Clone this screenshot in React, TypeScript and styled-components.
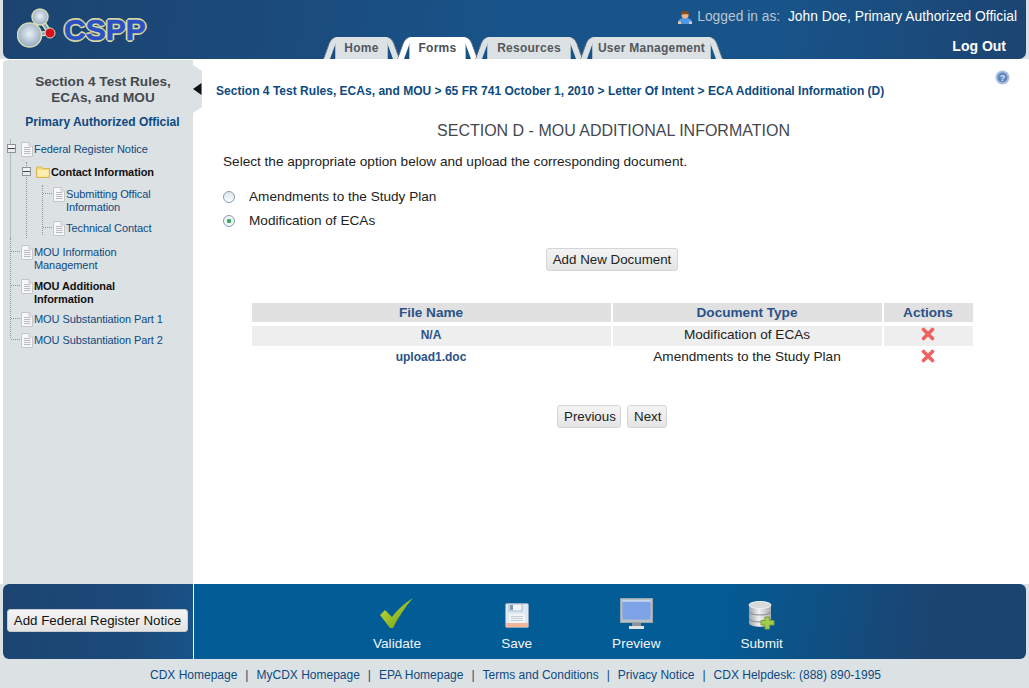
import React from "react";
import styled, { createGlobalStyle } from "styled-components";

const GlobalStyle = createGlobalStyle`
  html, body {
    margin: 0;
    padding: 0;
    height: 100%;
    background: #dce1e4;
    font-family: "Liberation Sans", Arial, sans-serif;
  }
`;

const MoleculeIcon = () => (
  <svg width="46" height="44" viewBox="0 0 46 44">
    <defs>
      <radialGradient id="ball" cx="0.5" cy="0.45" r="0.6">
        <stop offset="0" stopColor="#e9eff6" />
        <stop offset="1" stopColor="#8ea3bb" />
      </radialGradient>
    </defs>
    <path d="M13 28 L23 11 L33 26 Z" fill="none" stroke="#dfe6c4" strokeWidth="5" />
    <path d="M13 28 L23 11 L33 26 Z" fill="none" stroke="#8fa3ba" strokeWidth="2.5" />
    <circle cx="23" cy="10" r="8" fill="url(#ball)" stroke="#d6dcb4" strokeWidth="1.5" />
    <circle cx="12.5" cy="28" r="12" fill="url(#ball)" stroke="#d6dcb4" strokeWidth="1.5" />
    <circle cx="33" cy="26" r="5" fill="#d6101c" stroke="#d6dcb4" strokeWidth="1" />
  </svg>
);

const UserIcon = () => (
  <svg width="16" height="15" viewBox="0 0 16 15">
    <path d="M1 13 C1 9 4 8 8 8 C12 8 15 9 15 13 L15 14 L1 14 Z" fill="#4e97e8" />
    <rect x="1" y="11.5" width="3" height="2.5" fill="#e7c9a8" />
    <rect x="12" y="11.5" width="3" height="2.5" fill="#e7c9a8" />
    <circle cx="8" cy="5" r="3.6" fill="#e8b58c" />
    <path d="M4 5 C4 1 6 1 8 1 C11 1 12 2 12 5 C10 3.5 7 3.5 4 5 Z" fill="#8a4a1f" />
  </svg>
);

const HelpIcon = () => (
  <svg width="15" height="15" viewBox="0 0 15 15">
    <circle cx="7.5" cy="7.5" r="7" fill="#a9c0e0" />
    <circle cx="7.5" cy="7.5" r="5" fill="#6288be" />
    <text x="7.5" y="11" textAnchor="middle" fontSize="9" fontWeight="bold" fill="#dfe8f5" fontFamily="Liberation Sans">?</text>
  </svg>
);

const DocIcon = () => (
  <svg width="14" height="15" viewBox="0 0 14 15">
    <path d="M1.5 0.5 H9 L12.5 4 V14.5 H1.5 Z" fill="#f7f7f7" stroke="#c3c7ca" />
    <path d="M9 0.5 V4 H12.5" fill="#e4e6e8" stroke="#c3c7ca" />
    <path d="M4 5.5 H10.5 M4 7.5 H10.5 M4 9.5 H10.5 M4 11.5 H10.5" stroke="#b9bdc0" strokeWidth="1" />
  </svg>
);

const FolderIcon = () => (
  <svg width="15" height="13" viewBox="0 0 15 13">
    <path d="M0.5 2 H5.5 L7 3.5 H13.5 V12.5 H0.5 Z" fill="#f7d978" stroke="#d9b655" />
    <path d="M1.5 5 H12.5 V11.5 H1.5 Z" fill="#fdeeb0" />
  </svg>
);

const CrossIcon = () => (
  <svg width="14" height="14" viewBox="0 0 14 14">
    <path d="M2.5 2.5 L11.5 11.5 M11.5 2.5 L2.5 11.5" stroke="#f0625f" strokeWidth="3.6" strokeLinecap="round" />
  </svg>
);

const CheckIcon = () => (
  <svg width="36" height="34" viewBox="0 0 36 34">
    <defs>
      <linearGradient id="chk" x1="0" y1="0" x2="1" y2="1">
        <stop offset="0" stopColor="#c8e03a" />
        <stop offset="1" stopColor="#6c9a12" />
      </linearGradient>
    </defs>
    <path d="M1 17 L6 12 L13 19 C18 12 26 5 34 0 C26 9 19 20 14 30 L11 30 Z" fill="url(#chk)" />
  </svg>
);

const SaveIcon = () => (
  <svg width="24" height="25" viewBox="0 0 24 25">
    <rect x="0.5" y="0.5" width="23" height="24" rx="1.5" fill="#dfe9f2" stroke="#8ea4b8" />
    <rect x="4" y="1" width="13" height="7" fill="#f5f8fb" stroke="#a8bacb" />
    <rect x="5" y="2" width="3" height="5" fill="#7f9ab5" />
    <rect x="4" y="11" width="16" height="9" fill="#f2f4f5" />
    <path d="M6 13.5 H18 M6 15.5 H18 M6 17.5 H18" stroke="#c6ccd2" />
    <rect x="1" y="20" width="22" height="4" fill="#f2b79a" />
  </svg>
);

const MonitorIcon = () => (
  <svg width="33" height="32" viewBox="0 0 33 32">
    <rect x="0.5" y="0.5" width="32" height="24" fill="#b4bfc7" stroke="#9aa5ad" />
    <rect x="2.5" y="2.5" width="28" height="19" fill="#7ea2e6" />
    <rect x="2.5" y="2.5" width="28" height="1" fill="#f2f5fa" />
    <rect x="12" y="25" width="9" height="3" fill="#8a949b" />
    <rect x="9" y="28" width="15" height="3" fill="#dfe3e6" />
  </svg>
);

const DatabaseIcon = () => (
  <svg width="27" height="30" viewBox="0 0 27 30">
    <defs>
      <linearGradient id="db" x1="0" y1="0" x2="1" y2="0">
        <stop offset="0" stopColor="#9ea3a6" />
        <stop offset="0.45" stopColor="#f0f1f2" />
        <stop offset="1" stopColor="#a9adb0" />
      </linearGradient>
    </defs>
    <path d="M1 5 C1 1 23 1 23 5 V23 C23 28 1 28 1 23 Z" fill="url(#db)" />
    <ellipse cx="12" cy="5" rx="11" ry="3.5" fill="#d8dadc" stroke="#eef0f1" />
    <path d="M1 12 C4 16 20 16 23 12 M1 19 C4 23 20 23 23 19" fill="none" stroke="#85898c" />
    <path d="M17 17 H21.5 V20.5 H26 V25 H21.5 V29 H17 V25 H13 V20.5 H17 Z" fill="#a3cc4f" stroke="#7d9f37" />
  </svg>
);

const Page = () => (
  <Shell>
    <GlobalStyle />
    <Header>
      <Logo>
        <MoleculeIcon />
        <LogoText>CSPP</LogoText>
      </Logo>
      <Tabs>
        <Tab $width={53}>Home</Tab>
        <Tab $width={57} $active>
          Forms
        </Tab>
        <Tab $width={84}>Resources</Tab>
        <Tab $width={119}>User Management</Tab>
      </Tabs>
      <HeaderRight>
        <Login>
          <UserIcon />
          <LoginLabel>Logged in as:</LoginLabel> John Doe, Primary Authorized Official
        </Login>
        <LogOut>Log Out</LogOut>
      </HeaderRight>
    </Header>

    <Body>
      <Sidebar>
        <SideTitle>Section 4 Test Rules, ECAs, and MOU</SideTitle>
        <Collapse>
          <svg width="9" height="12" viewBox="0 0 9 12">
            <path d="M8.5 0 V12 L0 6 Z" fill="#111" />
          </svg>
        </Collapse>
        <Role>Primary Authorized Official</Role>
        <Tree>
          <Trunk $left={7} $top={0} $height={99} $solid />
          <Trunk $left={7} $top={99} $height={100} />
          <Trunk $left={23} $top={23} $height={76} />
          <Trunk $left={39} $top={46} $height={50} />

          <Row $depth={0} $noLine>
            <Expander $depth={0} />
            <DocIcon />
            <Label>Federal Register Notice</Label>
          </Row>
          <Row $depth={1} $gap={2} $noLine>
            <Expander $depth={1} />
            <FolderIcon />
            <Label $bold>Contact Information</Label>
          </Row>
          <Row $depth={2} $gap={1}>
            <DocIcon />
            <Label>Submitting Offical Information</Label>
          </Row>
          <Row $depth={2}>
            <DocIcon />
            <Label>Technical Contact</Label>
          </Row>
          <Row $depth={0} $gap={3}>
            <DocIcon />
            <Label>MOU Information Management</Label>
          </Row>
          <Row $depth={0}>
            <DocIcon />
            <Label $bold>MOU Additional Information</Label>
          </Row>
          <Row $depth={0} $gap={-1}>
            <DocIcon />
            <Label>MOU Substantiation Part 1</Label>
          </Row>
          <Row $depth={0}>
            <DocIcon />
            <Label>MOU Substantiation Part 2</Label>
          </Row>
        </Tree>
      </Sidebar>

      <Main>
        <Help>
          <HelpIcon />
        </Help>
        <Breadcrumb>
          Section 4 Test Rules, ECAs, and MOU &gt; 65 FR 741 October 1, 2010 &gt; Letter Of Intent &gt; ECA Additional
          Information (D)
        </Breadcrumb>
        <Heading>SECTION D - MOU ADDITIONAL INFORMATION</Heading>
        <Intro>Select the appropriate option below and upload the corresponding document.</Intro>
        <RadioList>
          <RadioRow>
            <Radio />
            Amendments to the Study Plan
          </RadioRow>
          <RadioRow>
            <Radio $checked />
            Modification of ECAs
          </RadioRow>
        </RadioList>
        <Centered $top={19}>
          <Button>Add New Document</Button>
        </Centered>
        <DocTable>
          <thead>
            <tr>
              <HeadCell $width={359}>File Name</HeadCell>
              <HeadCell $width={269}>Document Type</HeadCell>
              <HeadCell $width={89}>Actions</HeadCell>
            </tr>
          </thead>
          <tbody>
            <tr>
              <FileCell $shaded>N/A</FileCell>
              <Cell $shaded>Modification of ECAs</Cell>
              <Cell $shaded>
                <CrossIcon />
              </Cell>
            </tr>
            <tr>
              <FileCell>upload1.doc</FileCell>
              <Cell>Amendments to the Study Plan</Cell>
              <Cell>
                <CrossIcon />
              </Cell>
            </tr>
          </tbody>
        </DocTable>
        <Centered $top={37}>
          <Button $width={64}>Previous</Button>
          <Button $width={40}>Next</Button>
        </Centered>
      </Main>
    </Body>

    <ActionBar>
      <ActionLeft>
        <LightButton>Add Federal Register Notice</LightButton>
      </ActionLeft>
      <ActionRight>
        <Action $gap={4}>
          <CheckIcon />
          Validate
        </Action>
        <Action $gap={8}>
          <SaveIcon />
          Save
        </Action>
        <Action $gap={6}>
          <MonitorIcon />
          Preview
        </Action>
        <Action $gap={6}>
          <DatabaseIcon />
          Submit
        </Action>
      </ActionRight>
    </ActionBar>

    <Footer>
      <span>CDX Homepage</span>
      <span>|</span>
      <span>MyCDX Homepage</span>
      <span>|</span>
      <span>EPA Homepage</span>
      <span>|</span>
      <span>Terms and Conditions</span>
      <span>|</span>
      <span>Privacy Notice</span>
      <span>|</span>
      <span>CDX Helpdesk: (888) 890-1995</span>
    </Footer>
  </Shell>
);

const Shell = styled.div`
  display: flex;
  flex-direction: column;
  height: 688px;
  width: 1029px;
  overflow: hidden;
`;

const Header = styled.header`
  display: flex;
  align-items: flex-start;
  height: 59px;
  margin: 0 3px;
  flex: none;
  border-radius: 0 0 7px 7px;
  background: linear-gradient(100deg, #1c4471 0%, #1b4a7a 25%, #18548a 50%, #18548a 75%, #1c4471 100%);
`;

const Logo = styled.div`
  display: flex;
  align-items: flex-start;
  width: 322px;
  flex: none;
  padding: 7px 0 0 14px;
  box-sizing: border-box;
  gap: 1px;
`;

const LogoText = styled.div`
  font-size: 30px;
  line-height: 34px;
  margin-top: 6px;
  font-weight: bold;
  color: #2a50c4;
  -webkit-text-stroke: 0.6px #2a50c4;
  text-shadow: 2px 0 0 #d8d8a0, -2px 0 0 #d8d8a0, 0 2px 0 #d8d8a0, 0 -2px 0 #d8d8a0, 1px 1px 0 #d8d8a0, -1px -1px 0 #d8d8a0,
    1px -1px 0 #d8d8a0, -1px 1px 0 #d8d8a0;
`;

const Tabs = styled.nav`
  display: flex;
  flex: none;
  gap: 21px;
  margin: 37px -60px 0 10px;
`;

const Tab = styled.div<{ $active?: boolean; $width: number }>`
  position: relative;
  box-sizing: border-box;
  width: ${(p) => p.$width}px;
  height: 22px;
  display: flex;
  align-items: center;
  justify-content: center;
  white-space: nowrap;
  font-size: 12px;
  font-weight: bold;
  letter-spacing: 0.25px;
  color: ${(p) => (p.$active ? "#4a4f55" : "#53585e")};
  background: ${(p) => (p.$active ? "#ffffff" : "#dce1e4")};
  border-left: 1px solid #a9bccb;
  border-right: 1px solid #a9bccb;

  &::before,
  &::after {
    content: "";
    position: absolute;
    top: 0;
    bottom: 0;
    width: 7px;
    background: ${(p) => (p.$active ? "#ffffff" : "#dce1e4")};
    box-sizing: border-box;
  }
  &::before {
    left: -9px;
    transform: skewX(-20deg);
    border-left: 1px solid #6a7178;
    border-top-left-radius: 6px;
  }
  &::after {
    right: -9px;
    transform: skewX(20deg);
    border-right: 1px solid #6a7178;
    border-top-right-radius: 6px;
  }
`;

const HeaderRight = styled.div`
  margin-left: auto;
  display: flex;
  flex-direction: column;
  align-items: flex-end;
  padding: 8px 9px 0 0;
`;

const Login = styled.div`
  display: flex;
  align-items: center;
  gap: 4px;
  white-space: pre;
  font-size: 13.8px;
  line-height: 18px;
  color: #ffffff;
`;

const LoginLabel = styled.span`
  color: #b9c6d2;
`;

const LogOut = styled.div`
  margin: 12px 0 0;
  padding-right: 11px;
  font-size: 14px;
  line-height: 16px;
  font-weight: bold;
  color: #ffffff;
`;

const Body = styled.div`
  flex: 1;
  display: flex;
  min-height: 0;
  padding-top: 1px;
  background: #ffffff;
`;

const Sidebar = styled.aside`
  position: relative;
  flex: none;
  width: 190px;
  margin-left: 3px;
  background: #dce1e4;
  border-radius: 4px 0 0 0;
`;

const SideTitle = styled.div`
  padding: 14px 12px 0 22px;
  text-align: center;
  font-size: 13.6px;
  line-height: 16px;
  font-weight: bold;
  color: #44484e;
`;

const Collapse = styled.div`
  position: absolute;
  top: 5px;
  left: 190px;
  width: 9px;
  height: 48px;
  display: flex;
  align-items: center;
  background: #dce1e4;
  clip-path: polygon(0 0, 100% 6px, 100% calc(100% - 6px), 0 100%);
`;

const Role = styled.div`
  margin-top: 8px;
  padding-left: 9px;
  text-align: center;
  font-size: 12px;
  line-height: 16px;
  font-weight: bold;
  color: #0c4a80;
`;

const Tree = styled.div`
  position: relative;
  margin-top: 9px;
`;

const Trunk = styled.div<{ $left: number; $top: number; $height: number; $solid?: boolean }>`
  position: absolute;
  left: ${(p) => p.$left}px;
  top: ${(p) => p.$top}px;
  height: ${(p) => p.$height}px;
  border-left: 1px ${(p) => (p.$solid ? "solid #b5babd" : "dotted #8f9498")};
`;

const Row = styled.div<{ $depth: number; $gap?: number; $noLine?: boolean }>`
  position: relative;
  display: flex;
  align-items: flex-start;
  margin-top: ${(p) => p.$gap ?? 0}px;
  padding: 4px 24px 4px ${(p) => 17 + p.$depth * 16}px;

  svg {
    flex: none;
    margin: -1px 0 -1px;
  }

  &::before {
    content: ${(p) => (p.$noLine ? "none" : '""')};
    position: absolute;
    left: ${(p) => 8 + p.$depth * 16}px;
    width: 9px;
    top: 9px;
    border-top: 1px dotted #8f9498;
  }
`;

const Expander = styled.div<{ $depth: number }>`
  position: absolute;
  left: ${(p) => 4 + p.$depth * 15}px;
  top: 5px;
  width: 9px;
  height: 9px;
  box-sizing: border-box;
  border: 1px solid #8f9498;
  background: linear-gradient(#f3f4f5 0 3px, #444 3px 4px, #e8eaec 4px);
  background-clip: padding-box;
`;

const Label = styled.span<{ $bold?: boolean }>`
  font-size: 11px;
  line-height: 13px;
  letter-spacing: -0.08px;
  font-weight: ${(p) => (p.$bold ? "bold" : "normal")};
  color: ${(p) => (p.$bold ? "#111" : "#0c4a80")};
`;

const Main = styled.main`
  position: relative;
  flex: 1;
  min-width: 0;
  padding-left: 2px;
  color: #222;
  font-size: 13.6px;
`;

const Help = styled.div`
  position: absolute;
  top: 10px;
  right: 19px;
`;

const Breadcrumb = styled.div`
  padding: 23px 0 0 21px;
  font-size: 12px;
  line-height: 16px;
  letter-spacing: 0.02px;
  font-weight: bold;
  color: #0c4a80;
`;

const Heading = styled.h1`
  margin: 23px 0 0 3px;
  text-align: center;
  font-size: 16px;
  line-height: 18px;
  font-weight: normal;
  color: #44484e;
`;

const Intro = styled.p`
  margin: 14px 0 0 28px;
  line-height: 16px;
`;

const RadioList = styled.div`
  margin: 19px 0 0 28px;
  display: flex;
  flex-direction: column;
  gap: 8px;
`;

const RadioRow = styled.label`
  display: flex;
  align-items: center;
  gap: 14px;
  line-height: 16px;
`;

const Radio = styled.span<{ $checked?: boolean }>`
  width: 10px;
  height: 10px;
  border-radius: 50%;
  border: 1px solid #7f9db5;
  background: ${(p) =>
    p.$checked ? "radial-gradient(circle, #3fae5f 0 2px, #f2f5f7 2.5px)" : "linear-gradient(#dfe6ec, #fbfcfd)"};
`;

const Centered = styled.div<{ $top: number }>`
  display: flex;
  justify-content: center;
  gap: 6px;
  margin-top: ${(p) => p.$top}px;
`;

const Button = styled.button<{ $width?: number }>`
  height: 23px;
  width: ${(p) => (p.$width ? `${p.$width}px` : "auto")};
  padding: 0 6px;
  white-space: nowrap;
  font-family: inherit;
  font-size: 13.33px;
  color: #222;
  border: 1px solid #d3d5d6;
  border-radius: 3px;
  background: linear-gradient(#f4f4f4, #e4e4e4);
`;

const DocTable = styled.table`
  margin: 32px auto 0;
  border-collapse: separate;
  border-spacing: 2px 0;
  font-size: 13.6px;
`;

const HeadCell = styled.th<{ $width: number }>`
  width: ${(p) => p.$width}px;
  height: 19px;
  padding: 0;
  box-sizing: border-box;
  background: #e1e1e1;
  color: #2a5288;
  font-weight: bold;
  line-height: 19px;
  text-align: center;
`;

const Cell = styled.td<{ $shaded?: boolean }>`
  height: ${(p) => (p.$shaded ? 18 : 22)}px;
  padding: 0 0 ${(p) => (p.$shaded ? 2 : 0)}px;
  text-align: center;
  line-height: 16px;
  background: ${(p) => (p.$shaded ? "#eeeeee" : "transparent")};
  background-clip: padding-box;
  color: #222;

  svg {
    display: block;
    margin: 0 auto 3px;
  }

  tbody tr:first-child & {
    border-top: 4px solid #fff;
  }
`;

const FileCell = styled(Cell)`
  font-size: 12px;
  font-weight: bold;
  color: #2a5288;
`;

const ActionBar = styled.div`
  flex: none;
  display: flex;
  height: 75px;
  margin: 0 3px;
  overflow: hidden;
  background: #ffffff;
  border-radius: 6px;
`;

const ActionLeft = styled.div`
  width: 190px;
  flex: none;
  display: flex;
  align-items: center;
  box-sizing: border-box;
  padding: 0 0 2px 4px;
  background: linear-gradient(100deg, #1c4471 0%, #1b4a7a 70%, #18548a 100%);
`;

const LightButton = styled(Button)`
  width: 181px;
  padding: 0;
  border-color: #c9cbcc;
  color: #111;
`;

const ActionRight = styled.div`
  flex: 1;
  margin-left: 1px;
  display: flex;
  justify-content: flex-start;
  align-items: flex-end;
  gap: 80px;
  padding: 0 0 7px 179px;
  background: linear-gradient(100deg, #025c96 0%, #025c96 62%, #1c4471 88%, #1c4471 100%);
`;

const Action = styled.div<{ $gap: number }>`
  display: flex;
  flex-direction: column;
  align-items: center;
  gap: ${(p) => p.$gap}px;
  font-size: 13.6px;
  line-height: 16px;
  color: #f1f5f8;
`;

const Footer = styled.footer`
  flex: none;
  height: 29px;
  display: flex;
  align-items: center;
  justify-content: center;
  gap: 8px;
  padding: 3px 0 0 2px;
  box-sizing: border-box;
  font-size: 12px;
  color: #0c4a80;
`;

export default Page;
